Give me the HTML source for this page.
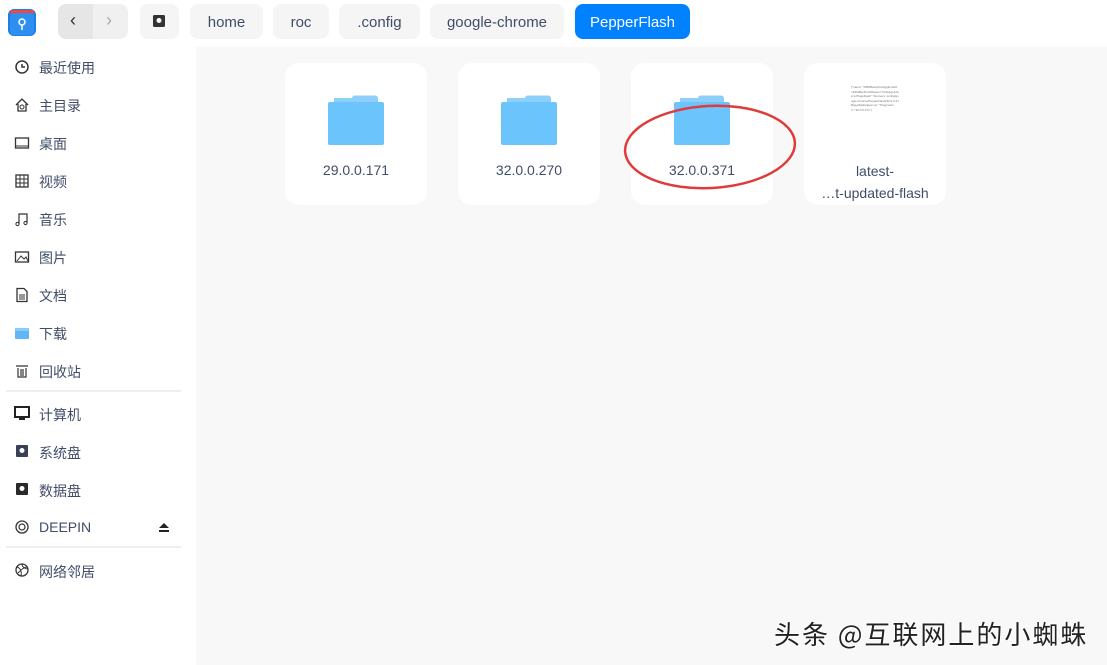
<!DOCTYPE html>
<html><head><meta charset="utf-8"><style>
*{box-sizing:border-box;margin:0;padding:0}
body{width:1107px;height:665px;overflow:hidden;background:#fff;font-family:"Liberation Sans","Noto Sans CJK SC",sans-serif;position:relative;color:#414d68}
.top{position:absolute;left:0;top:0;width:1107px;height:47px;background:#fff}
.btn{position:absolute;top:4px;height:35px;border-radius:8px;background:#f5f5f5;font-size:15px;color:#414d68;line-height:37px;text-align:center}
.side{position:absolute;left:0;top:47px;width:196px;height:618px;background:#fff}
.main{position:absolute;left:196px;top:47px;width:911px;height:618px;background:#f8f8f8}
.it{position:absolute;left:39px;font-size:14px;color:#414d68}
.ic{position:absolute;left:14px;width:16px;height:16px}
.sep{position:absolute;left:6px;width:175px;height:2px;background:#eee}
.card{position:absolute;top:16px;width:142px;height:142px;background:#fff;border-radius:14px;text-align:center;font-size:14px;color:#414d68}
.fold{position:absolute;left:43px;top:32px;width:56px;height:50px}
.lbl{position:absolute;left:0;width:142px;top:99px}
.wm{position:absolute;left:774px;top:615px;font-size:26px;color:#222;font-family:"Noto Sans CJK SC",sans-serif;text-shadow:1px 1px 0 #fff,-1px -1px 0 #fff;letter-spacing:2px}
</style></head><body>
<div class="top">
<svg style="position:absolute;left:7px;top:7px" width="30" height="30" viewBox="0 0 30 30"><rect x="1" y="2" width="28" height="27" rx="6" fill="#1e7ee6"/><rect x="3" y="3" width="24" height="4" rx="2" fill="#e84a4a"/><rect x="3" y="6" width="24" height="22" rx="4" fill="#2f8ff0"/><circle cx="15" cy="15" r="3" fill="none" stroke="#fff" stroke-width="1.5"/><line x1="15" y1="18" x2="15" y2="23" stroke="#fff" stroke-width="1.5"/></svg>
<div class="btn" style="left:58px;width:70px;background:#f0f0f0"></div>
<div style="position:absolute;left:58px;top:4px;width:35px;height:35px;border-radius:8px 0 0 8px;background:#e6e6e6"></div>
<div style="position:absolute;left:70px;top:10px;font-size:18px;color:#333">‹</div>
<div style="position:absolute;left:106px;top:10px;font-size:18px;color:#aaa">›</div>
<div class="btn" style="left:140px;width:39px"></div>
<svg style="position:absolute;left:153px;top:15px" width="12" height="12"><rect width="12" height="12" rx="1.5" fill="#333"/><circle cx="6" cy="5.5" r="2.5" fill="#fff"/></svg>
<div class="btn" style="left:190px;width:73px">home</div>
<div class="btn" style="left:273px;width:56px">roc</div>
<div class="btn" style="left:339px;width:81px">.config</div>
<div class="btn" style="left:430px;width:134px">google-chrome</div>
<div class="btn" style="left:575px;width:115px;background:#0081ff;color:#fff">PepperFlash</div>
</div>
<div class="side">
<svg class="ic" style="top:12px" viewBox="0 0 16 16"><circle cx="8" cy="8" r="6" fill="none" stroke="#333" stroke-width="1.5"/><path d="M8 5v3h3" fill="none" stroke="#333" stroke-width="1.5"/></svg><div class="it" style="top:11px">最近使用</div>
<svg class="ic" style="top:50px" viewBox="0 0 16 16"><path d="M2 8L8 2l6 6M4 7v7h8V7" fill="none" stroke="#333" stroke-width="1.3"/><circle cx="8" cy="10" r="2" fill="none" stroke="#333"/></svg><div class="it" style="top:49px">主目录</div>
<svg class="ic" style="top:88px" viewBox="0 0 16 16"><rect x="1.5" y="3" width="13" height="10" fill="none" stroke="#333" stroke-width="1.3"/><line x1="2" y1="11" x2="14" y2="11" stroke="#333"/></svg><div class="it" style="top:87px">桌面</div>
<svg class="ic" style="top:126px" viewBox="0 0 16 16"><rect x="2" y="2" width="12" height="12" fill="none" stroke="#333" stroke-width="1.3"/><path d="M6 2v12M10 2v12M2 6h12M2 10h12" stroke="#333"/></svg><div class="it" style="top:125px">视频</div>
<svg class="ic" style="top:164px" viewBox="0 0 16 16"><path d="M5 13V3h8v9" fill="none" stroke="#333" stroke-width="1.2"/><circle cx="3.5" cy="13" r="1.6" fill="none" stroke="#333"/><circle cx="11.5" cy="12" r="1.6" fill="none" stroke="#333"/></svg><div class="it" style="top:163px">音乐</div>
<svg class="ic" style="top:202px" viewBox="0 0 16 16"><rect x="1.5" y="3" width="13" height="10" fill="none" stroke="#333" stroke-width="1.3"/><path d="M3 12l4-5 3 3 2-2 2 4" fill="none" stroke="#333"/></svg><div class="it" style="top:201px">图片</div>
<svg class="ic" style="top:240px" viewBox="0 0 16 16"><path d="M3 1.5h7l3 3v10H3z" fill="none" stroke="#333" stroke-width="1.3"/><path d="M5 8h6M5 10h6M5 12h6" stroke="#333"/></svg><div class="it" style="top:239px">文档</div>
<svg class="ic" style="top:278px" viewBox="0 0 16 16"><rect x="1" y="3" width="14" height="11" rx="1" fill="#5fb8f5"/><rect x="1" y="3" width="14" height="3" fill="#86cdfa"/></svg><div class="it" style="top:277px">下载</div>
<svg class="ic" style="top:316px" viewBox="0 0 16 16"><path d="M2 3h12M4 5v9h8V5M7 6v7M9 6v7" fill="none" stroke="#333" stroke-width="1.2"/></svg><div class="it" style="top:315px">回收站</div>
<div class="sep" style="top:343px"></div>
<svg class="ic" style="top:358px" viewBox="0 0 16 16"><rect x="1" y="2" width="14" height="10" fill="none" stroke="#222" stroke-width="2"/><path d="M5 14h6" stroke="#222" stroke-width="2"/></svg><div class="it" style="top:358px">计算机</div>
<svg class="ic" style="top:396px" viewBox="0 0 16 16"><rect x="2" y="2" width="12" height="12" rx="1" fill="#3a4055"/><circle cx="8" cy="7.5" r="2.5" fill="#fff"/></svg><div class="it" style="top:396px">系统盘</div>
<svg class="ic" style="top:434px" viewBox="0 0 16 16"><rect x="2" y="2" width="12" height="12" rx="1" fill="#2a2a2a"/><circle cx="8" cy="7.5" r="2.5" fill="#fff"/></svg><div class="it" style="top:434px">数据盘</div>
<svg class="ic" style="top:472px" viewBox="0 0 16 16"><circle cx="8" cy="8" r="6" fill="none" stroke="#333" stroke-width="1.3"/><circle cx="8" cy="8" r="3" fill="none" stroke="#333" stroke-width="1.2"/></svg><div class="it" style="top:472px">DEEPIN</div>
<svg style="position:absolute;left:158px;top:476px" width="12" height="10"><path d="M6 0l5 5H1z M1 7h10v2H1z" fill="#222"/></svg>
<div class="sep" style="top:499px"></div>
<svg class="ic" style="top:515px" viewBox="0 0 16 16"><circle cx="8" cy="8" r="6" fill="none" stroke="#333" stroke-width="1.3"/><path d="M3 5c3 1 5 4 4 9M13 5c-3 0-6 3-9 6M8 2c0 3 3 5 6 5" fill="none" stroke="#333"/></svg><div class="it" style="top:515px">网络邻居</div>
</div>
<div class="main">
<div class="card" style="left:89px"><svg class="fold" viewBox="0 0 56 50"><path d="M6 3h20v6H6z" fill="#8ccffb"/><path d="M24 2.5q1-2 3-2h20q3 0 3 3v4H24z" fill="#8ccffb"/><rect x="0" y="7" width="56" height="43" rx="2" fill="#6cc4fc"/></svg><div class="lbl">29.0.0.171</div></div>
<div class="card" style="left:262px"><svg class="fold" viewBox="0 0 56 50"><path d="M6 3h20v6H6z" fill="#8ccffb"/><path d="M24 2.5q1-2 3-2h20q3 0 3 3v4H24z" fill="#8ccffb"/><rect x="0" y="7" width="56" height="43" rx="2" fill="#6cc4fc"/></svg><div class="lbl">32.0.0.270</div></div>
<div class="card" style="left:435px"><svg class="fold" viewBox="0 0 56 50"><path d="M6 3h20v6H6z" fill="#8ccffb"/><path d="M24 2.5q1-2 3-2h20q3 0 3 3v4H24z" fill="#8ccffb"/><rect x="0" y="7" width="56" height="43" rx="2" fill="#6cc4fc"/></svg><div class="lbl">32.0.0.371</div></div>
<div class="card" style="left:608px"><div style="position:absolute;left:47px;top:22px;width:48px;font-size:3px;line-height:4.5px;color:#777;text-align:left;word-break:break-all">{"name":"XBMBaxQuhsSgtghxdsOmNbaBwJhsUbblaxw="chdsAgnKhxe"a:PlugsFlash":"Homexy:.config/google-chrome/PepperFlash/32.0.0.37Bgxgrflashplayer.so","Pluginxsion":"32.0.0.371"}</div><div class="lbl" style="top:97px;line-height:22px">latest-<br>…t-updated-flash</div></div>
<svg style="position:absolute;left:427px;top:56px" width="175" height="88"><ellipse cx="87" cy="44" rx="85" ry="41" fill="none" stroke="#e03a3a" stroke-width="2.5" transform="rotate(-3 87 44)"/></svg>
</div>
<div class="wm">头条 @互联网上的小蜘蛛</div>
</body></html>
